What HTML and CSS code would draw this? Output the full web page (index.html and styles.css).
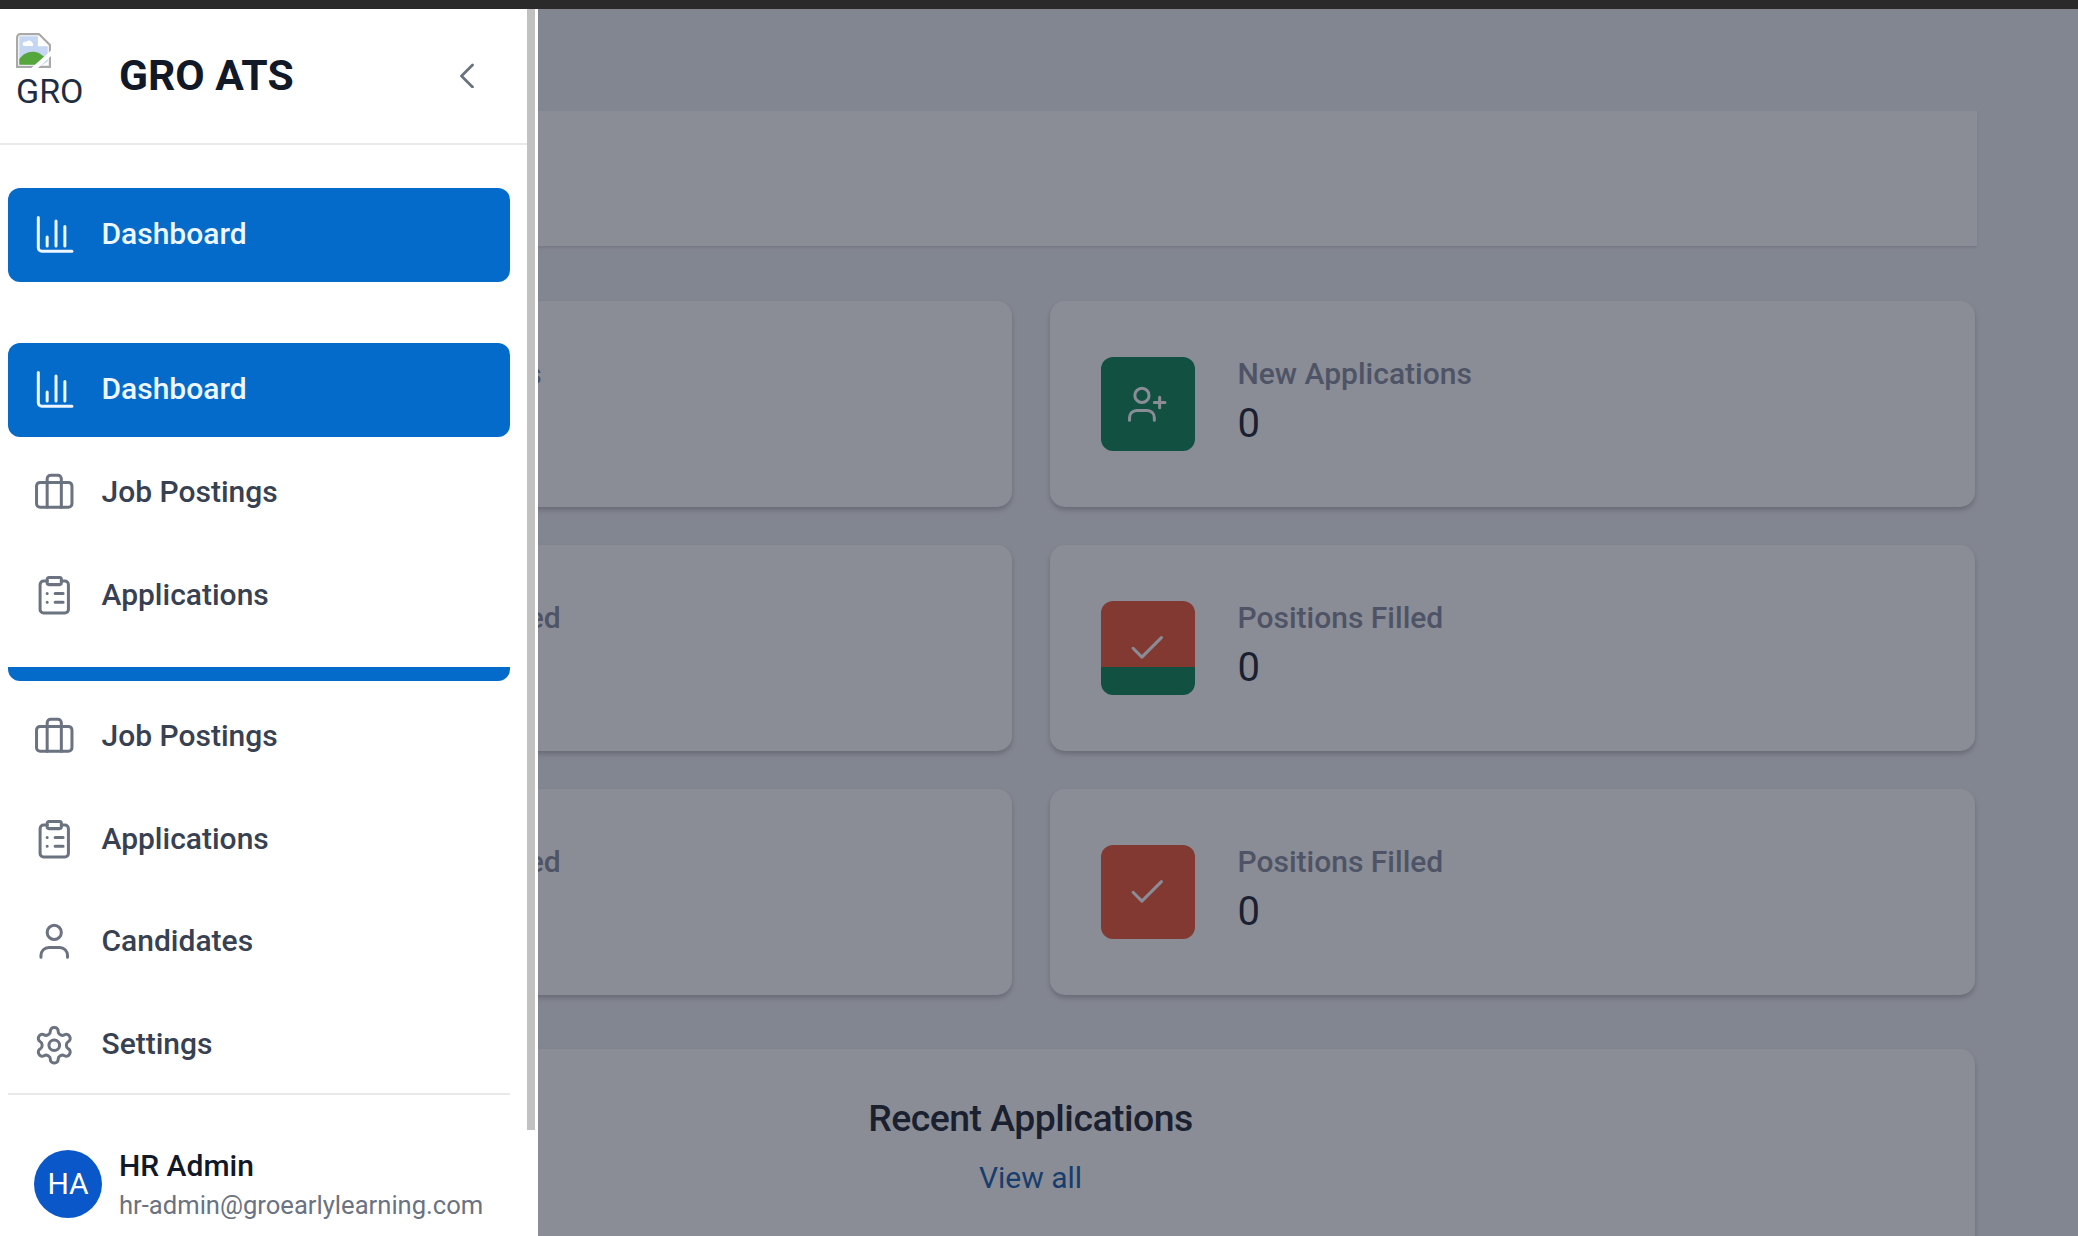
FILE: index.html

```html
<!DOCTYPE html>
<html lang="en">
<head>
    <meta charset="UTF-8">
    <meta name="viewport" content="width=device-width, initial-scale=1.0">
    <title>GRO ATS - Dashboard</title>
    <link rel="stylesheet" href="styles.css">
</head>
<body>
    <svg class="icon-defs" aria-hidden="true">
        <symbol id="i-chart" viewBox="0 0 24 24"><path d="M3 2v17a2 2 0 0 0 2 2h17M8 18v-5M13 18V4M18 18V7"/></symbol>
        <symbol id="i-case" viewBox="0 0 24 24"><rect x="2" y="7" width="20" height="14" rx="2"/><path d="M16 21V5a2 2 0 0 0-2-2h-4a2 2 0 0 0-2 2v16"/></symbol>
        <symbol id="i-clip" viewBox="0 0 24 24"><path d="M16 4h2a2 2 0 0 1 2 2v14a2 2 0 0 1-2 2H6a2 2 0 0 1-2-2V6a2 2 0 0 1 2-2h2"/><rect x="8" y="2" width="8" height="4" rx="1"/><path d="M12.500 11H17M12.500 16H17M8 11h.01M8 16h.01"/></symbol>
        <symbol id="i-user" viewBox="0 0 24 24"><path d="M4.500 21v-1a4.500 4.500 0 0 1 4.500-4.500h6a4.500 4.500 0 0 1 4.500 4.500v1"/><circle cx="12" cy="7" r="4"/></symbol>
        <symbol id="i-gear" viewBox="0 0 24 24"><path d="M12.220 2h-.44a2 2 0 0 0-2 2v.18a2 2 0 0 1-1 1.730l-.43.25a2 2 0 0 1-2 0l-.15-.08a2 2 0 0 0-2.730.73l-.22.38a2 2 0 0 0 .73 2.730l.15.1a2 2 0 0 1 1 1.720v.51a2 2 0 0 1-1 1.740l-.15.09a2 2 0 0 0-.73 2.730l.22.38a2 2 0 0 0 2.730.73l.15-.08a2 2 0 0 1 2 0l.43.25a2 2 0 0 1 1 1.730V20a2 2 0 0 0 2 2h.44a2 2 0 0 0 2-2v-.18a2 2 0 0 1 1-1.730l.43-.25a2 2 0 0 1 2 0l.15.08a2 2 0 0 0 2.730-.73l.22-.39a2 2 0 0 0-.73-2.730l-.15-.08a2 2 0 0 1-1-1.740v-.5a2 2 0 0 1 1-1.740l.15-.09a2 2 0 0 0 .73-2.730l-.22-.38a2 2 0 0 0-2.730-.73l-.15.08a2 2 0 0 1-2 0l-.43-.25a2 2 0 0 1-1-1.730V4a2 2 0 0 0-2-2z"/><circle cx="12" cy="12" r="3"/></symbol>
        <symbol id="i-user-plus" viewBox="0 0 24 24"><path d="M16 21v-1.500a4 4 0 0 0-4-4H6a4 4 0 0 0-4 4V21"/><circle cx="9" cy="7" r="4"/><path d="M19 8v6M22 11h-6"/></symbol>
        <symbol id="i-check" viewBox="0 0 24 24"><path d="M20 6 9 17l-5-5"/></symbol>
    </svg>

    <div class="topbar"></div>

    <main class="main">
        <header class="page-header"></header>

        <section class="stats">
            <div class="card">
                <div class="card-icon blue"><svg class="icon"><use href="#i-case"/></svg></div>
                <div><p class="card-label">Active Job Postings</p><p class="card-value">0</p></div>
            </div>
            <div class="card">
                <div class="card-icon green"><svg class="icon"><use href="#i-user-plus"/></svg></div>
                <div><p class="card-label">New Applications</p><p class="card-value">0</p></div>
            </div>
            <div class="card">
                <div class="card-icon blue"><svg class="icon"><use href="#i-clip"/></svg></div>
                <div><p class="card-label">Interviews Scheduled</p><p class="card-value">0</p></div>
            </div>
            <div class="card">
                <div class="card-icon red-green"><svg class="icon"><use href="#i-check"/></svg></div>
                <div><p class="card-label">Positions Filled</p><p class="card-value">0</p></div>
            </div>
            <div class="card">
                <div class="card-icon blue"><svg class="icon"><use href="#i-clip"/></svg></div>
                <div><p class="card-label">Interviews Scheduled</p><p class="card-value">0</p></div>
            </div>
            <div class="card">
                <div class="card-icon red"><svg class="icon"><use href="#i-check"/></svg></div>
                <div><p class="card-label">Positions Filled</p><p class="card-value">0</p></div>
            </div>
        </section>

        <section class="recent">
            <h2>Recent Applications</h2>
            <a class="view-all" href="#">View all</a>
        </section>
    </main>

    <div class="overlay"></div>

    <aside class="sidebar">
        <div class="sidebar-header">
            <div class="logo">
                <svg class="broken-img" viewBox="0 0 16 16" aria-hidden="true">
                    <path class="bi-frame" d="M2 .5h8.500L15.500 5.500V15.500H.5V2A1.500 1.500 0 0 1 2 .5z"/>
                    <path class="bi-sky" d="M1.500 1.500h8.500v4.500h4.500v7L12 14.500H1.500z"/>
                    <path class="bi-cloud" d="M3 5.200a1.300 1.300 0 0 1 1.800-1.200 1.500 1.500 0 0 1 2.600.4 1 1 0 0 1 .2 1.500H3.500z"/>
                    <path class="bi-hill" d="M1.500 14.500v-2.500c2-3 6-4.500 9.500-2.500l2 1.500-4 3.500z"/>
                    <path class="bi-slash" d="M7 16l9-8v2.500L10 16z"/>
                </svg>
                <span class="logo-alt">GRO</span>
            </div>
            <span class="brand">GRO ATS</span>
            <svg class="collapse" viewBox="0 0 14 24"><path d="M12.500 1.500 1.500 12.500 12.500 23.500"/></svg>
        </div>

        <nav class="nav">
            <a class="nav-item active first" href="#"><svg class="icon"><use href="#i-chart"/></svg>Dashboard</a>
            <a class="nav-item active" href="#"><svg class="icon"><use href="#i-chart"/></svg>Dashboard</a>
            <a class="nav-item after-active" href="#"><svg class="icon"><use href="#i-case"/></svg>Job Postings</a>
            <a class="nav-item" href="#"><svg class="icon"><use href="#i-clip"/></svg>Applications</a>
            <div class="nav-sliver"></div>
            <a class="nav-item" href="#"><svg class="icon"><use href="#i-case"/></svg>Job Postings</a>
            <a class="nav-item" href="#"><svg class="icon"><use href="#i-clip"/></svg>Applications</a>
            <a class="nav-item candidates" href="#"><svg class="icon"><use href="#i-user"/></svg>Candidates</a>
            <a class="nav-item" href="#"><svg class="icon"><use href="#i-gear"/></svg>Settings</a>
        </nav>

        <div class="user">
            <div class="avatar">HA</div>
            <div class="user-info">
                <p class="user-name">HR Admin</p>
                <p class="user-email">hr-admin@groearlylearning.com</p>
            </div>
        </div>

        <div class="scroll-thumb"></div>
    </aside>
</body>
</html>
```

FILE: styles.css

```css
* {
    box-sizing: border-box;
}
html, body {
    height: 100%;
}
body {
    margin: 0;
    overflow: hidden;
    font-family: Roboto, "Liberation Sans", sans-serif;
    background-color: #eff0f3;
    color: #111827;
}
p, h2 {
    margin: 0;
}
a {
    text-decoration: none;
}
.icon-defs {
    display: none;
}
.icon {
    width: 42.500px;
    height: 42.500px;
    flex: none;
    fill: none;
    stroke: currentColor;
    stroke-width: 1.700;
    stroke-linecap: round;
    stroke-linejoin: round;
}
.topbar {
    height: 9px;
    background-color: #2a2a2a;
}

/* page behind the drawer */
.main {
    height: calc(100vh - 9px);
    overflow: hidden;
    padding: 102px 103px 0 86px;
}
.page-header {
    height: 135px;
    margin: 0 -2px 0 -86px;
    background-color: #fff;
    box-shadow: 0 2px 2px rgba(0,0,0,0.1);
}
.stats {
    display: grid;
    grid-template-columns: 1fr 1fr;
    gap: 38px;
    margin-top: 55px;
}
.card {
    display: flex;
    align-items: flex-start;
    gap: 43px;
    height: 206px;
    padding: 56px 51px;
    background-color: #fff;
    border-radius: 15px;
    box-shadow: 0 3px 5px rgba(0,0,0,0.24);
}
.card-icon {
    display: flex;
    align-items: center;
    justify-content: center;
    width: 94px;
    height: 94px;
    flex: none;
    border-radius: 12px;
    color: #fff;
}
.blue {
    background-color: #046bca;
}
.green {
    background-color: #007f4e;
}
.red {
    background-color: #ec4d2c;
}
.red-green {
    background: linear-gradient(#ec4d2c 70%, #007f4e 70%);
}
.card-label {
    font-size: 30px;
    font-weight: 500;
    line-height: 33px;
    color: #7f8799;
}
.card-value {
    margin-top: 12px;
    font-size: 40px;
    font-weight: 400;
    line-height: 44px;
    color: #111827;
}
.recent {
    display: flex;
    flex-direction: column;
    align-items: center;
    height: 220px;
    margin-top: 54px;
    padding-top: 45px;
    background-color: #fff;
    border-radius: 15px;
    box-shadow: 0 3px 5px rgba(0,0,0,0.24);
}
.recent h2 {
    font-size: 37.400px;
    font-weight: 500;
    line-height: 48px;
    letter-spacing: -0.5px;
    color: #111827;
}
.view-all {
    margin-top: 18px;
    font-size: 30px;
    line-height: 36px;
    color: #0b56a8;
}
.overlay {
    position: fixed;
    top: 9px;
    right: 0;
    bottom: 0;
    left: 0;
    background-color: rgba(34,40,57,0.53);
}

/* drawer */
.sidebar {
    position: fixed;
    top: 9px;
    left: 0;
    bottom: 0;
    display: flex;
    flex-direction: column;
    width: 538px;
    background-color: #fff;
}
.sidebar-header {
    display: flex;
    align-items: center;
    flex: none;
    height: 136px;
    margin-right: 3px;
    padding: 0 61px 0 16px;
    border-bottom: 2px solid #e8e9eb;
}
.logo {
    display: flex;
    flex-direction: column;
    width: 103px;
    flex: none;
    margin-bottom: 10px;
}
.broken-img {
    display: block;
    width: 35px;
    height: 35px;
}
.bi-frame {
    fill: #fff;
    stroke: #a9a9a9;
    stroke-width: 1;
}
.bi-sky {
    fill: #c4d6f2;
}
.bi-cloud {
    fill: #fff;
}
.bi-hill {
    fill: #55a63c;
}
.bi-slash {
    fill: #fff;
}
.logo-alt {
    margin-top: 4px;
    font-size: 34px;
    line-height: 38px;
    color: #1f2d44;
}
.brand {
    flex: 1;
    margin-bottom: 2px;
    font-size: 42.600px;
    font-weight: 700;
    color: #111827;
}
.collapse {
    width: 14px;
    height: 25px;
    margin-bottom: 2px;
    fill: none;
    stroke: #6b7280;
    stroke-width: 2.800;
    stroke-linecap: round;
    stroke-linejoin: round;
}
.nav {
    flex: none;
    display: flex;
    flex-direction: column;
    gap: 9.300px;
    width: 502px;
    margin-left: 8px;
    padding-top: 43px;
}
.nav-item {
    display: flex;
    align-items: center;
    gap: 26px;
    height: 94px;
    flex: none;
    padding: 0 0 3px 25px;
    font-size: 30px;
    font-weight: 500;
    border-radius: 12px;
    color: #374151;
}
.nav-item .icon {
    color: #6b7280;
}
.nav-item.active {
    background-color: #046bca;
    color: #eef6ff;
}
.nav-item.active .icon {
    margin-top: 3px;
    color: #eef6ff;
}
.nav-item.first {
    margin-bottom: 52px;
}
.nav-item.after-active {
    margin-top: -0.500px;
}
.nav-item.candidates {
    margin-top: -2px;
}
.candidates .icon,
.candidates ~ .nav-item .icon {
    margin-top: 3px;
}
.nav-sliver {
    height: 14px;
    margin-top: 14px;
    background-color: #046bca;
    border-radius: 0 0 12px 12px;
}
.user {
    display: flex;
    align-items: flex-start;
    gap: 17px;
    width: 502px;
    margin-top: 1px;
    margin-left: 8px;
    padding: 55px 0 0 26px;
    border-top: 2px solid #e8e9eb;
}
.avatar {
    display: flex;
    align-items: center;
    justify-content: center;
    width: 68px;
    height: 68px;
    flex: none;
    border-radius: 50%;
    background-color: #0a57c9;
    font-size: 30px;
    color: #fff;
}
.user-info {
    margin-top: -2px;
}
.user-name {
    font-size: 30px;
    font-weight: 500;
    line-height: 36px;
    color: #111827;
}
.user-email {
    margin-top: 4px;
    font-size: 25.600px;
    line-height: 34px;
    color: #6b7280;
}
.scroll-thumb {
    position: absolute;
    top: 0;
    left: 527px;
    width: 8px;
    height: 1121px;
    background-color: #c1c1c1;
}
```
